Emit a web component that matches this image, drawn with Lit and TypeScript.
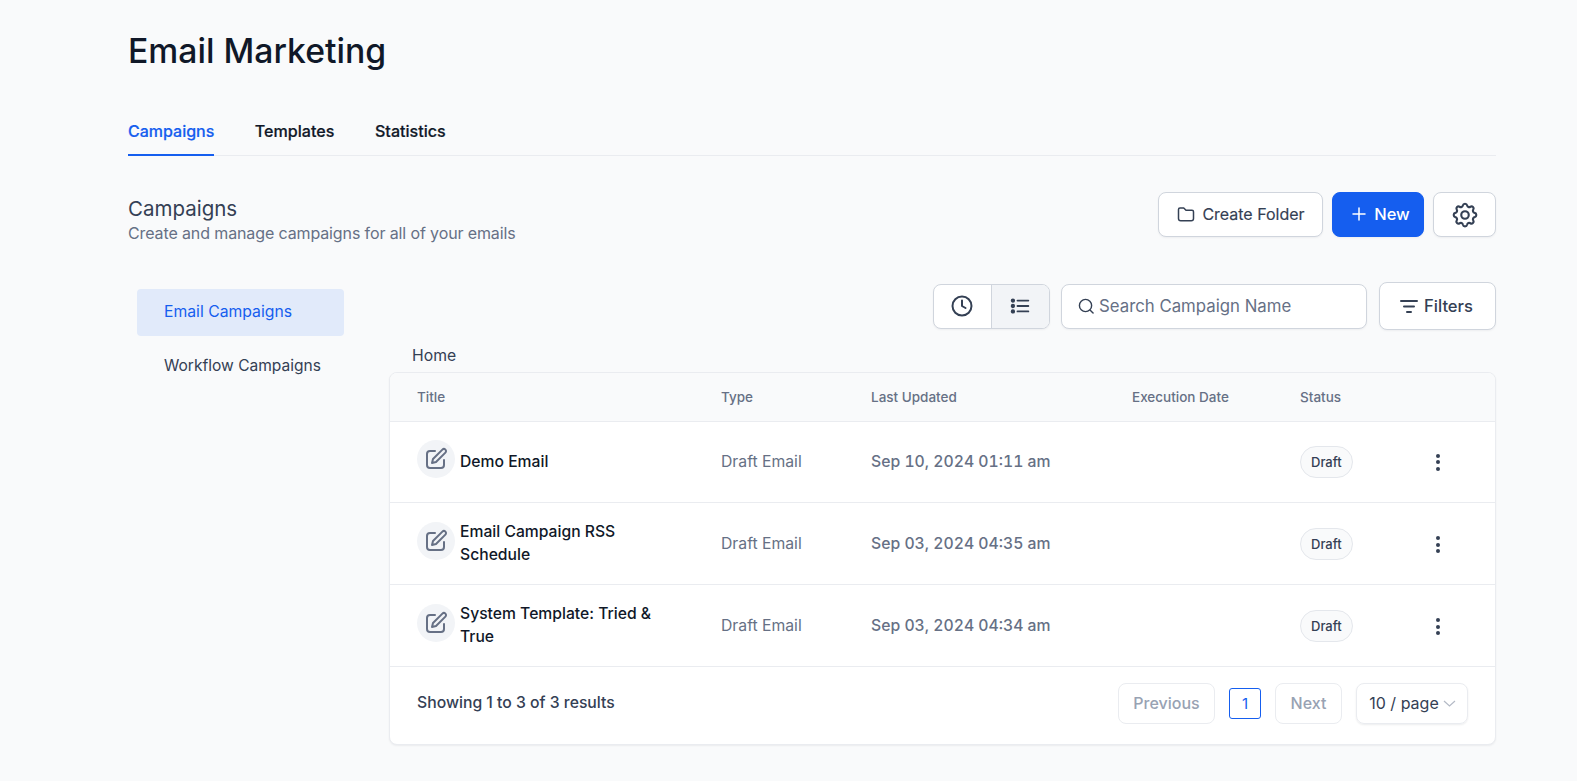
import { LitElement, html, css } from "lit";
import { customElement } from "lit/decorators.js";

const editIcon = html`<svg width="24" height="24" viewBox="0 0 24 24" fill="none" stroke="#667085" stroke-width="2" stroke-linecap="round" stroke-linejoin="round"><path d="M11 4H6a3 3 0 0 0-3 3v11a3 3 0 0 0 3 3h11a3 3 0 0 0 3-3v-5"/><path d="M18.400 2.600a2.100 2.100 0 0 1 3 3L12 15l-4 1 1-4 9.400-9.400z"/></svg>`;

const rows = [
  { title: "Demo Email", date: "Sep 10, 2024 01:11 am" },
  { title: "Email Campaign RSS Schedule", date: "Sep 03, 2024 04:35 am" },
  { title: "System Template: Tried & True", date: "Sep 03, 2024 04:34 am" },
];

@customElement("app-root")
export class AppRoot extends LitElement {
  static styles = css`
    :host { display: block; min-height: 781px; background: #f9fafb; font-family: Inter, "Liberation Sans", sans-serif; color: #101828; }
    * { box-sizing: border-box; }
    .page { padding: 0 81px 0 128px; }
    h1 { margin: 0; height: 101px; padding-top: 26px; font-size: 33.750px; line-height: 50px; font-weight: 500; color: #101828; }
    .tabs { display: flex; gap: 40.500px; height: 55px; border-bottom: 1px solid #eaecf0; }
    .tab { height: 55px; padding-top: 20px; font-size: 16.100px; line-height: 20px; font-weight: 500; color: #101828; -webkit-text-stroke: .2px; }
    .tab.on { color: #155eef; border-bottom: 2px solid #155eef; font-size: 16px; }
    .head { display: flex; justify-content: space-between; margin-top: 36px; height: 45px; }
    .head h2 { margin: 4px 0 0; font-size: 20.500px; line-height: 25px; font-weight: 400; color: #344054; }
    .head p { margin: 1px 0 0; font-size: 16px; letter-spacing: -.12px; line-height: 22px; color: #667085; }
    .actions { display: flex; gap: 9px; }
    .btn { display: flex; align-items: center; justify-content: center; gap: 8px; background: #fff; border: 1px solid #d0d5dd; border-radius: 8px; font-size: 16px; font-weight: 500; color: #344054; box-shadow: 0 1px 2px rgba(16,24,40,.05); }
    .folder { width: 165px; height: 45px; font-weight: 400; -webkit-text-stroke: .15px; gap: 7px; padding: 0 2px 2px 0; }
    .new { width: 92px; height: 45px; background: #155eef; border-color: #155eef; color: #fff; gap: 7px; font-size: 16.500px; padding-bottom: 2px; }
    .gear { width: 63px; height: 45px; }
    .body { display: flex; margin-top: 45px; }
    .side { width: 207px; margin: 7px 45px 0 9px; flex: none; }
    .side div { height: 47px; padding: 0 0 2px 27px; display: flex; align-items: center; font-size: 15.750px; color: #344054; border-radius: 4px; margin-bottom: 7px; }
    .side .on { background: #e1eafa; color: #155eef; }
    .side .wf { font-size: 15.550px; }
    .main { flex: 1; min-width: 0; }
    .tools { display: flex; justify-content: flex-end; align-items: center; gap: 12px; height: 48px; }
    .toggle { display: flex; width: 117px; height: 45px; margin-right: -1px; border: 1px solid #d0d5dd; border-radius: 8px; overflow: hidden; background: #fff; box-shadow: 0 1px 2px rgba(16,24,40,.05); }
    .toggle span { flex: 1; display: flex; align-items: center; justify-content: center; padding-right: 2px; }
    .toggle span + span { background: #f2f4f7; border-left: 1px solid #d0d5dd; }
    .search { width: 306px; height: 45px; display: flex; align-items: center; gap: 5px; padding-left: 16px; background: #fff; border: 1px solid #d0d5dd; border-radius: 8px; font-size: 16.800px; color: #667085; box-shadow: 0 1px 2px rgba(16,24,40,.05); }
    .filters { width: 117px; height: 48px; font-size: 16.600px; gap: 5px; padding-right: 3px; }
    .home { margin-left: 23px; height: 42px; padding-top: 15px; font-size: 15.750px; line-height: 22px; color: #344054; }
    .card { height: 373px; background: #fff; border: 1px solid #eaecf0; border-radius: 8px; box-shadow: 0 1px 2px rgba(16,24,40,.06); overflow: hidden; }
    .row { display: grid; grid-template-columns: 304px 150px 261px 168px 139px 1fr; padding-left: 27px; align-items: center; border-bottom: 1px solid #eaecf0; }
    .row.th { height: 49px; background: #f9fafb; font-size: 13.500px; font-weight: 500; color: #667085; }
    .row.td { height: 82px; font-size: 15.750px; color: #667085; }
    .row.td.first { height: 81px; padding-bottom: 2px; }
    .row.td .date { font-weight: 500; font-size: 15.750px; font-variant-numeric: tabular-nums; }
    .title { display: flex; align-items: center; gap: 5px; width: 245px; }
    .circle { flex: none; width: 38px; height: 38px; margin-bottom: 5px; border-radius: 50%; background: #f2f4f7; display: flex; align-items: center; justify-content: center; }
    .name { font-size: 15.700px; line-height: 23px; font-weight: 500; color: #101828; margin-bottom: 2px; }
    .first .name { margin-bottom: 0; }
    .badge { display: inline-flex; align-items: center; height: 32px; padding: 0 10px; font-size: 13px; font-weight: 500; color: #344054; background: #f9fafb; border: 1px solid #e4e7ec; border-radius: 16px; }
    .first .badge { position: relative; top: 1px; }
    .dots { display: flex; flex-direction: column; gap: 2.500px; width: 4px; margin: 2px 0 0 -3px; }
    .dots i { width: 4px; height: 4px; border-radius: 50%; background: #344054; }
    .foot { display: flex; justify-content: space-between; align-items: center; height: 76px; padding: 0 27px 4px; font-size: 15.750px; font-weight: 500; color: #344054; }
    .count { margin-bottom: 2px; }
    .pager { display: flex; align-items: center; gap: 14px; }
    .pbtn { height: 41px; display: flex; align-items: center; justify-content: center; border: 1px solid #eaecf0; border-radius: 8px; font-size: 16px; font-weight: 500; color: #98a2b3; }
    .prev { width: 97px; }
    .next { width: 67px; }
    .cur { width: 32px; height: 31px; display: flex; align-items: center; justify-content: center; border: 1px solid #155eef; border-radius: 3px; color: #155eef; font-size: 15px; font-weight: 400; }
    .per { width: 112px; height: 41px; display: flex; align-items: center; justify-content: center; gap: 3px; padding-left: 2px; border: 1px solid #eaecf0; border-radius: 8px; font-size: 16px; font-weight: 400; color: #344054; box-shadow: 0 1px 2px rgba(16,24,40,.08); }
    .ico-folder { margin-left: 3px; }
    .ico-plus { margin-left: 5px; }
  `;

  render() {
    return html`<div class="page">
      <h1>Email Marketing</h1>
      <div class="tabs">
        <div class="tab on">Campaigns</div><div class="tab">Templates</div><div class="tab">Statistics</div>
      </div>
      <div class="head">
        <div><h2>Campaigns</h2><p>Create and manage campaigns for all of your emails</p></div>
        <div class="actions">
          <div class="btn folder"><svg class="ico-folder" width="18" height="18" viewBox="0 0 24 24" fill="none" stroke="#344054" stroke-width="2" stroke-linejoin="round"><path d="M2 6a2 2 0 0 1 2-2h5l3 3h8a2 2 0 0 1 2 2v9a3 3 0 0 1-3 3H5a3 3 0 0 1-3-3z"/></svg>Create Folder</div>
          <div class="btn new"><svg class="ico-plus" width="16" height="16" viewBox="0 0 16 16" fill="none" stroke="#fff" stroke-width="1.500" stroke-linecap="round"><path d="M8 2v12M2 8h12"/></svg>New</div>
          <div class="btn gear"><svg width="30" height="30" viewBox="0 0 24 24" fill="none" stroke="#344054" stroke-width="1.700" stroke-linecap="round" stroke-linejoin="round"><path d="M10.300 4.300c.4-1.800 3-1.800 3.400 0a1.700 1.700 0 0 0 2.600 1.100c1.500-.9 3.300.8 2.300 2.300a1.700 1.700 0 0 0 1.100 2.600c1.800.4 1.800 3 0 3.400a1.700 1.700 0 0 0-1.100 2.600c.9 1.500-.8 3.300-2.300 2.300a1.700 1.700 0 0 0-2.600 1.100c-.4 1.800-3 1.800-3.400 0a1.700 1.700 0 0 0-2.600-1.100c-1.500.9-3.300-.8-2.300-2.300a1.700 1.700 0 0 0-1.100-2.600c-1.800-.4-1.800-3 0-3.400a1.700 1.700 0 0 0 1.100-2.600c-.9-1.500.8-3.300 2.300-2.300a1.700 1.700 0 0 0 2.600-1.100z"/><circle cx="12" cy="12" r="3"/></svg></div>
        </div>
      </div>
      <div class="body">
        <div class="side"><div class="on">Email Campaigns</div><div class="wf">Workflow Campaigns</div></div>
        <div class="main">
          <div class="tools">
            <div class="toggle">
              <span><svg width="24" height="24" viewBox="0 0 24 24" fill="none" stroke="#344054" stroke-width="2" stroke-linecap="round" stroke-linejoin="round"><circle cx="12" cy="12" r="9.500"/><path d="M12 6.500V12l3.500 2"/></svg></span>
              <span><svg width="20" height="20" viewBox="0 0 24 24" fill="none" stroke="#344054" stroke-width="2.200" stroke-linecap="round"><path d="M9 5.500h13M9 12h13M9 18.500h13"/><circle cx="3.500" cy="5.500" r="1.500" fill="#344054"/><circle cx="3.500" cy="12" r="1.500" fill="#344054"/><circle cx="3.500" cy="18.500" r="1.500" fill="#344054"/></svg></span>
            </div>
            <div class="search"><svg width="16" height="16" viewBox="0 0 17 17" fill="none" stroke="#344054" stroke-width="1.500" stroke-linecap="round"><circle cx="8" cy="8" r="6.500"/><path d="M13 13l3 3"/></svg>Search Campaign Name</div>
            <div class="btn filters"><svg width="20" height="20" viewBox="0 0 20 20" fill="none" stroke="#344054" stroke-width="2" stroke-linecap="round"><path d="M2 5h16M5 10.500h10M8 16h4"/></svg>Filters</div>
          </div>
          <div class="home">Home</div>
          <div class="card">
            <div class="row th"><div>Title</div><div>Type</div><div>Last Updated</div><div>Execution Date</div><div>Status</div><div></div></div>
            ${rows.map((r, i) => html`<div class="row td ${i === 0 ? "first" : ""}">
              <div class="title"><span class="circle">${editIcon}</span><span class="name">${r.title}</span></div>
              <div>Draft Email</div>
              <div class="date">${r.date}</div>
              <div></div>
              <div><span class="badge">Draft</span></div>
              <div class="dots"><i></i><i></i><i></i></div>
            </div>`)}
            <div class="foot">
              <div class="count">Showing 1 to 3 of 3 results</div>
              <div class="pager">
                <div class="pbtn prev">Previous</div>
                <div class="cur">1</div>
                <div class="pbtn next">Next</div>
                <div class="per">10 / page <svg width="15" height="14" viewBox="0 0 15 14" fill="none" stroke="#b4bac6" stroke-width="1.200"><path d="M2 5l5.500 5 5.500-5"/></svg></div>
              </div>
            </div>
          </div>
        </div>
      </div>
    </div>`;
  }
}
